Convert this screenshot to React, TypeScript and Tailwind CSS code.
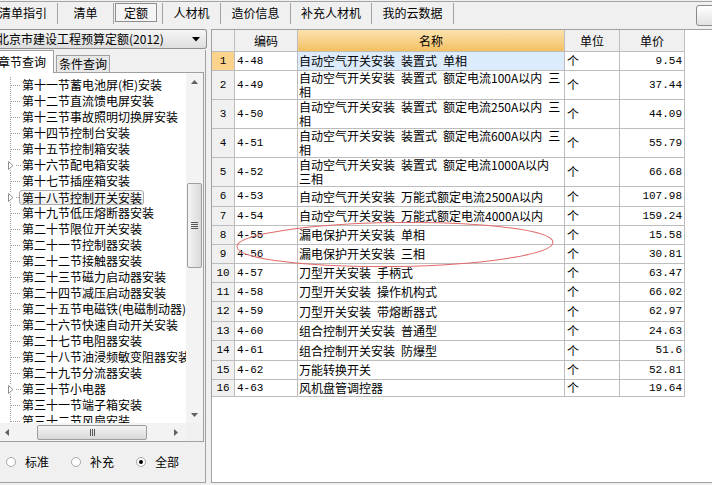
import React from "react";

type TreeItem = { t: string; exp?: boolean; sel?: boolean };

const treeItems: TreeItem[] = [
  { t: "第十一节蓄电池屏(柜)安装" },
  { t: "第十二节直流馈电屏安装" },
  { t: "第十三节事故照明切换屏安装" },
  { t: "第十四节控制台安装" },
  { t: "第十五节控制箱安装" },
  { t: "第十六节配电箱安装", exp: true },
  { t: "第十七节插座箱安装" },
  { t: "第十八节控制开关安装", exp: true, sel: true },
  { t: "第十九节低压熔断器安装" },
  { t: "第二十节限位开关安装" },
  { t: "第二十一节控制器安装" },
  { t: "第二十二节接触器安装" },
  { t: "第二十三节磁力启动器安装" },
  { t: "第二十四节减压启动器安装" },
  { t: "第二十五节电磁铁(电磁制动器)" },
  { t: "第二十六节快速自动开关安装" },
  { t: "第二十七节电阻器安装" },
  { t: "第二十八节油浸频敏变阻器安装" },
  { t: "第二十九节分流器安装" },
  { t: "第三十节小电器", exp: true },
  { t: "第三十一节端子箱安装" },
  { t: "第三十二节风扇安装" },
];

const S = "\u2002";

type GridRow = { n: number; code: string; name: string[]; price: string; h: string };

const rows: GridRow[] = [
  { n: 1, code: "4-48", name: [`自动空气开关安装${S}装置式${S}单相`], price: "9.54", h: "h-[19px]" },
  { n: 2, code: "4-49", name: [`自动空气开关安装${S}装置式${S}额定电流100A以内${S}三`, "相"], price: "37.44", h: "h-[29px]" },
  { n: 3, code: "4-50", name: [`自动空气开关安装${S}装置式${S}额定电流250A以内${S}三`, "相"], price: "44.09", h: "h-[29px]" },
  { n: 4, code: "4-51", name: [`自动空气开关安装${S}装置式${S}额定电流600A以内${S}三`, "相"], price: "55.79", h: "h-[29px]" },
  { n: 5, code: "4-52", name: [`自动空气开关安装${S}装置式${S}额定电流1000A以内`, "三相"], price: "66.68", h: "h-[29px]" },
  { n: 6, code: "4-53", name: [`自动空气开关安装${S}万能式额定电流2500A以内`], price: "107.98", h: "h-[20px]" },
  { n: 7, code: "4-54", name: [`自动空气开关安装${S}万能式额定电流4000A以内`], price: "159.24", h: "h-[19px]" },
  { n: 8, code: "4-55", name: [`漏电保护开关安装${S}单相`], price: "15.58", h: "h-[19px]" },
  { n: 9, code: "4-56", name: [`漏电保护开关安装${S}三相`], price: "30.81", h: "h-[19px]" },
  { n: 10, code: "4-57", name: [`刀型开关安装${S}手柄式`], price: "63.47", h: "h-[19px]" },
  { n: 11, code: "4-58", name: [`刀型开关安装${S}操作机构式`], price: "66.02", h: "h-[19px]" },
  { n: 12, code: "4-59", name: [`刀型开关安装${S}带熔断器式`], price: "62.97", h: "h-[20px]" },
  { n: 13, code: "4-60", name: [`组合控制开关安装${S}普通型`], price: "24.63", h: "h-[19px]" },
  { n: 14, code: "4-61", name: [`组合控制开关安装${S}防爆型`], price: "51.6", h: "h-[20px]" },
  { n: 15, code: "4-62", name: ["万能转换开关"], price: "52.81", h: "h-[19px]" },
  { n: 16, code: "4-63", name: ["风机盘管调控器"], price: "19.64", h: "h-[17px]" },
];

function Sep() {
  return <div className="mt-[1px] h-[21px] w-px bg-[#a3a3a3]" />;
}

function Tab({ w, children }: { w: string; children: React.ReactNode }) {
  return <div className={`flex h-[21px] items-center justify-center ${w}`}>{children}</div>;
}

function Connector({ exp }: { exp?: boolean }) {
  return (
    <svg width="22" height="16" className="shrink-0">
      {exp ? (
        <>
          <line x1="10.5" y1="0" x2="10.5" y2="4" stroke="#a0a0a0" strokeDasharray="1 1" />
          <line x1="10.5" y1="13" x2="10.5" y2="16" stroke="#a0a0a0" strokeDasharray="1 1" />
          <path d="M8.5 4.5 L13 8.5 L8.5 12.5 Z" fill="#ffffff" stroke="#8e8e8e" />
          <line x1="16" y1="8.5" x2="21" y2="8.5" stroke="#a0a0a0" strokeDasharray="1 1" />
        </>
      ) : (
        <>
          <line x1="10.5" y1="0" x2="10.5" y2="16" stroke="#a0a0a0" strokeDasharray="1 1" />
          <line x1="11" y1="8.5" x2="21" y2="8.5" stroke="#a0a0a0" strokeDasharray="1 1" />
        </>
      )}
    </svg>
  );
}

function Radio({ checked, label }: { checked?: boolean; label: string }) {
  return (
    <div className="flex items-center">
      <div className="flex h-[10px] w-[10px] items-center justify-center rounded-full border border-[#a8a8a8] bg-white">
        {checked && <div className="h-[4px] w-[4px] rounded-full bg-black" />}
      </div>
      <span className="ml-[9px] leading-[14px]">{label}</span>
    </div>
  );
}

function LeftPanel() {
  return (
    <div className="flex w-[206px] shrink-0 flex-col">
      {/* dropdown */}
      <div className="mt-[4px] flex h-[20px] w-[207px] items-center rounded-r-[3px] border-y border-r border-[#8f8f8f] bg-linear-to-b from-[#f6f6f6] to-[#dedede]">
        <span className="ml-[-3px] whitespace-nowrap leading-[14px]">北京市建设工程预算定额(2012)</span>
        <svg width="8" height="5" className="ml-auto mr-[6px]">
          <path d="M0 0 L8 0 L4 4.5 Z" fill="#000" />
        </svg>
      </div>
      <div className="mb-[2px] mt-[1px] flex flex-1 flex-col border-b border-r border-[#a0a0a0]">
        {/* tabs */}
        <div className="flex h-[22px]">
          <div className="relative z-10 flex h-[23px] w-[54px] items-center border-r border-t border-[#a0a0a0] bg-white">
            <span className="ml-[-2px] whitespace-nowrap leading-[14px]">章节查询</span>
          </div>
          <div className="ml-[2px] mt-[5px] flex h-[17px] w-[54px] items-center justify-center border-x border-t border-[#a0a0a0] bg-[#e8e8e8]">
            <span className="whitespace-nowrap leading-[14px]">条件查询</span>
          </div>
        </div>
        {/* tree box */}
        <div className="flex h-[370px] w-[204px] flex-col border-b border-r border-t border-[#a0a0a0] bg-white">
          <div className="flex h-[350px]">
            <div className="flex-1 overflow-hidden pt-[4px]">
              {treeItems.map((it) => (
                <div key={it.t} className="flex h-[16px] items-center whitespace-nowrap">
                  <Connector exp={it.exp} />
                  {it.sel ? (
                    <span className="ml-[-3px] flex h-[15px] items-center rounded-[3px] border border-[#a9a9a9] bg-linear-to-b from-[#fcfcfc] to-[#ececec] pl-[2px] pr-[1px] leading-[13px]">
                      {it.t}
                    </span>
                  ) : (
                    <span className="leading-[14px]">{it.t}</span>
                  )}
                </div>
              ))}
            </div>
            {/* vertical scrollbar */}
            <div className="flex w-[17px] flex-col bg-[#f3f3f3]">
              <div className="flex h-[17px] items-center justify-center">
                <svg width="7" height="4">
                  <path d="M0 4 L7 4 L3.5 0 Z" fill="#606060" />
                </svg>
              </div>
              <div className="mx-auto mt-[93px] flex h-[85px] w-[15px] flex-col items-center justify-center gap-[1px] rounded-[2px] border border-[#9e9e9e] bg-linear-to-r from-[#f4f4f4] to-[#d9d9d9]">
                <div className="h-px w-[7px] bg-[#555]" />
                <div className="h-px w-[7px] bg-[#555]" />
                <div className="h-px w-[7px] bg-[#555]" />
                <div className="h-px w-[7px] bg-[#555]" />
              </div>
              <div className="mt-auto flex h-[17px] items-center justify-center">
                <svg width="7" height="4">
                  <path d="M0 0 L7 0 L3.5 4 Z" fill="#606060" />
                </svg>
              </div>
            </div>
          </div>
          {/* horizontal scrollbar */}
          <div className="flex h-[18px]">
            <div className="flex w-[186px] items-center bg-[#f3f3f3]">
              <div className="flex w-[13px] items-center justify-center">
                <svg width="4" height="7">
                  <path d="M4 0 L4 7 L0 3.5 Z" fill="#606060" />
                </svg>
              </div>
              <div className="ml-[24px] flex h-[15px] w-[110px] items-center justify-center gap-[1px] rounded-[2px] border border-[#9e9e9e] bg-linear-to-b from-[#f4f4f4] to-[#d9d9d9]">
                <div className="h-[7px] w-px bg-[#555]" />
                <div className="h-[7px] w-px bg-[#555]" />
                <div className="h-[7px] w-px bg-[#555]" />
              </div>
              <div className="flex-1" />
              <div className="flex w-[20px] items-center justify-center">
                <svg width="4" height="7">
                  <path d="M0 0 L0 7 L4 3.5 Z" fill="#606060" />
                </svg>
              </div>
            </div>
            <div className="flex-1 bg-[#f0f0f0]" />
          </div>
        </div>
        {/* radios */}
        <div className="ml-[6px] flex flex-1 items-center gap-[22px]">
          <Radio label="标准" />
          <Radio label="补充" />
          <Radio label="全部" checked />
        </div>
      </div>
    </div>
  );
}

const mono = "font-['Liberation_Mono',monospace] text-[11px]";
const line = "border-[#bdbdbd]";

function RightPanel() {
  return (
    <div className="mb-[2px] mt-[4px] flex-1 border-b border-l border-t border-[#a0a0a0] bg-white">
      <div className="w-[473px]">
        {/* header */}
        <div className={`flex h-[22px] border-b ${line}`}>
          <div className={`w-[23px] border-r ${line} bg-[#f0f0f0]`} />
          <div className={`flex w-[63px] items-center justify-center border-r ${line} bg-[#f0f0f0]`}>编码</div>
          <div className={`flex w-[267px] items-center justify-center border-r ${line} bg-linear-to-b from-[#fce3ae] to-[#f3c061]`}>名称</div>
          <div className={`flex w-[55px] items-center justify-center border-r ${line} bg-[#f0f0f0]`}>单位</div>
          <div className={`flex w-[65px] items-center justify-center border-r ${line} bg-[#f0f0f0]`}>单价</div>
        </div>
        {rows.map((r) => {
          const sel = r.n === 1;
          return (
            <div key={r.n} className={`flex border-b ${line} ${r.h}`}>
              <div className={`flex w-[23px] items-center justify-center border-r ${line} ${sel ? "bg-[#fbd38d]" : "bg-[#f0f0f0]"} ${mono}`}>
                {r.n}
              </div>
              <div className={`flex w-[63px] items-center border-r ${line} pl-[2px] ${mono}`}>{r.code}</div>
              <div className={`flex w-[267px] items-center overflow-hidden whitespace-nowrap border-r ${line} pl-[1px] ${sel ? "bg-[#ddecfc]" : ""}`}>
                <div>
                  {r.name.map((l) => (
                    <div key={l} className="leading-[14px]">
                      {l}
                    </div>
                  ))}
                </div>
              </div>
              <div className={`flex w-[55px] items-center border-r ${line} pl-[2px] leading-[14px]`}>个</div>
              <div className={`flex w-[65px] items-center justify-end border-r ${line} pr-[2px] ${mono}`}>{r.price}</div>
            </div>
          );
        })}
      </div>
    </div>
  );
}

export default function App() {
  return (
    <div className="relative h-[485px] w-[712px] overflow-hidden bg-[#f0f0f0] font-['Noto_Sans_CJK_SC','Noto_Sans',sans-serif] text-[12px] text-black">
      {/* top tab bar */}
      <div className="h-[25px] pt-[1px]">
        <div className="flex h-[24px] border-t border-[#a3a3a3]">
          <Tab w="w-[57px] !justify-start">
            <span className="ml-[-1px] whitespace-nowrap leading-[14px]">清单指引</span>
          </Tab>
          <Sep />
          <Tab w="w-[55px]">清单</Tab>
          <Sep />
          <div className="ml-[1px] mr-[5px] mt-[1px] flex h-[19px] w-[42px] items-center justify-center border border-[#8e8e8e] bg-[#f5f5f5]">
            定额
          </div>
          <Sep />
          <Tab w="w-[57px]">人材机</Tab>
          <Sep />
          <Tab w="w-[69px]">造价信息</Tab>
          <Sep />
          <Tab w="w-[80px]">补充人材机</Tab>
          <Sep />
          <Tab w="w-[81px]">我的云数据</Tab>
          <Sep />
          <div className="ml-auto mr-[-8px] mt-[3px] h-[21px] w-[24px] rounded-[3px] border border-[#8a8a8a] bg-linear-to-b from-white to-[#e2e2e2]" />
        </div>
      </div>
      {/* main */}
      <div className="flex h-[460px]">
        <LeftPanel />
        <div className="w-[5px] shrink-0" />
        <RightPanel />
      </div>
      {/* red annotation ellipse */}
      <svg className="pointer-events-none absolute left-0 top-0" width="712" height="485">
        <ellipse cx="395" cy="244.5" rx="158" ry="22" transform="rotate(-0.8 395 244.5)" fill="none" stroke="#e26a6a" strokeWidth="1" />
      </svg>
    </div>
  );
}
